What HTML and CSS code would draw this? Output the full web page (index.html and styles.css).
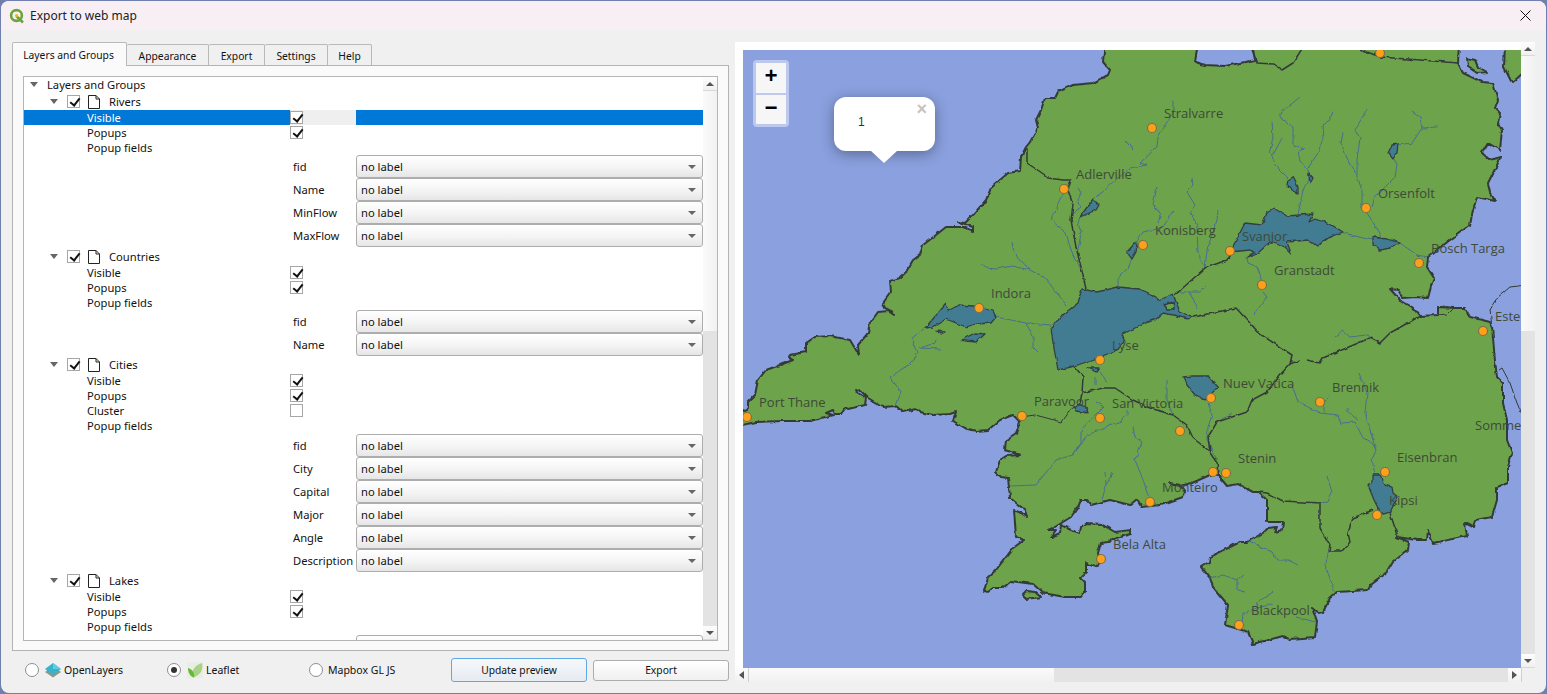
FILE: index.html
```html
<!DOCTYPE html>
<html lang="en">
<head>
<meta charset="utf-8">
<title>Export to web map</title>
<link rel="stylesheet" href="styles.css">
</head>
<body>
<div class="window">
  <header class="titlebar">
    <svg class="qgis" viewBox="0 0 16 16" width="16" height="16"><circle cx="7.500" cy="7.500" r="5.400" fill="none" stroke="#6ba53a" stroke-width="2.600"/><path d="M7.500 8.200l6.500 6.300" stroke="#6ba53a" stroke-width="2.600" fill="none"/><circle cx="7.600" cy="7.600" r="1.600" fill="#f0b429"/></svg>
    <span class="title">Export to web map</span>
    <svg class="close" viewBox="0 0 11 11" width="11" height="11"><path d="M.5.5l10 10M10.500.5l-10 10" stroke="#111" fill="none"/></svg>
  </header>
  <div class="content">
    <section class="left">
      <nav class="tabs">
        <span class="tab active">Layers and Groups</span>
        <span class="tab t-app">Appearance</span>
        <span class="tab t-exp">Export</span>
        <span class="tab t-set">Settings</span>
        <span class="tab t-help">Help</span>
      </nav>
      <div class="pane">
        <div class="treebox">
          <div class="tree">
            <div class="root"><i class="arrow"></i><span>Layers and Groups</span></div>

            <div class="layer"><i class="arrow"></i><b class="check on"></b><svg class="doc" viewBox="0 0 12 14" width="12" height="14"><path d="M.5.5h7.500l3.500 3.500v9.500h-11zM8 .5v3.500h3.500" fill="#fff" stroke="#222"/></svg><span>Rivers</span></div>
            <div class="prop selected"><span class="pname">Visible</span><span class="pval"><b class="check on"></b></span><span class="pfill"></span></div>
            <div class="prop"><span class="pname">Popups</span><span class="pval"><b class="check on"></b></span></div>
            <div class="prop"><span class="pname">Popup fields</span></div>
            <div class="field"><span class="flabel">fid</span><span class="combo">no label</span></div>
            <div class="field"><span class="flabel">Name</span><span class="combo">no label</span></div>
            <div class="field"><span class="flabel">MinFlow</span><span class="combo">no label</span></div>
            <div class="field"><span class="flabel">MaxFlow</span><span class="combo">no label</span></div>

            <div class="layer gap"><i class="arrow"></i><b class="check on"></b><svg class="doc" viewBox="0 0 12 14" width="12" height="14"><path d="M.5.5h7.500l3.500 3.500v9.500h-11zM8 .5v3.500h3.500" fill="#fff" stroke="#222"/></svg><span>Countries</span></div>
            <div class="prop"><span class="pname">Visible</span><span class="pval"><b class="check on"></b></span></div>
            <div class="prop"><span class="pname">Popups</span><span class="pval"><b class="check on"></b></span></div>
            <div class="prop"><span class="pname">Popup fields</span></div>
            <div class="field"><span class="flabel">fid</span><span class="combo">no label</span></div>
            <div class="field"><span class="flabel">Name</span><span class="combo">no label</span></div>

            <div class="layer"><i class="arrow"></i><b class="check on"></b><svg class="doc" viewBox="0 0 12 14" width="12" height="14"><path d="M.5.5h7.500l3.500 3.500v9.500h-11zM8 .5v3.500h3.500" fill="#fff" stroke="#222"/></svg><span>Cities</span></div>
            <div class="prop"><span class="pname">Visible</span><span class="pval"><b class="check on"></b></span></div>
            <div class="prop"><span class="pname">Popups</span><span class="pval"><b class="check on"></b></span></div>
            <div class="prop"><span class="pname">Cluster</span><span class="pval"><b class="check"></b></span></div>
            <div class="prop fieldhead"><span class="pname">Popup fields</span></div>
            <div class="field"><span class="flabel">fid</span><span class="combo">no label</span></div>
            <div class="field"><span class="flabel">City</span><span class="combo">no label</span></div>
            <div class="field"><span class="flabel">Capital</span><span class="combo">no label</span></div>
            <div class="field"><span class="flabel">Major</span><span class="combo">no label</span></div>
            <div class="field"><span class="flabel">Angle</span><span class="combo">no label</span></div>
            <div class="field"><span class="flabel">Description</span><span class="combo">no label</span></div>

            <div class="layer"><i class="arrow"></i><b class="check on"></b><svg class="doc" viewBox="0 0 12 14" width="12" height="14"><path d="M.5.5h7.500l3.500 3.500v9.500h-11zM8 .5v3.500h3.500" fill="#fff" stroke="#222"/></svg><span>Lakes</span></div>
            <div class="prop"><span class="pname">Visible</span><span class="pval"><b class="check on"></b></span></div>
            <div class="prop"><span class="pname">Popups</span><span class="pval"><b class="check on"></b></span></div>
            <div class="prop fieldhead"><span class="pname">Popup fields</span></div>
            <div class="field"><span class="flabel"></span><span class="combo"></span></div>
          </div>
          <div class="vscroll tree-scroll">
            <span class="sbtn"><i class="up"></i></span>
            <span class="thumb"></span>
            <span class="track"></span>
            <span class="sbtn"><i class="down"></i></span>
          </div>
        </div>
      </div>
      <footer class="bottom">
        <label class="opt"><i class="radio"></i>
          <svg class="ficon" viewBox="0 0 16 16" width="16" height="16"><path d="M8 4.500L16 10 8 15.500 0 10z" fill="#8a9a86"/><path d="M8 1L16 7 8 13 0 7z" fill="#35b3cf"/><path d="M8 1L16 7 8 7z" fill="#63cbe0"/></svg>
          <span>OpenLayers</span></label>
        <label class="opt"><i class="radio sel"></i>
          <svg class="ficon" viewBox="0 0 16 16" width="16" height="16"><rect width="16" height="16" fill="#e9ede6"/><path d="M15 1C16.500 7 14 13 6 15.500 3.500 9 8 3 15 1z" fill="#a8d285"/><path d="M1 6C1 10 3 15 7 15.500 8 11 5 7 1 6z" fill="#62bb30"/></svg>
          <span>Leaflet</span></label>
        <label class="opt"><i class="radio"></i><span class="mapbox">Mapbox GL JS</span></label>
        <button class="btn primary">Update preview</button>
        <button class="btn export">Export</button>
      </footer>
    </section>
    <section class="right">
      <div class="viewrow">
        <div class="webview">
          <div class="map">
            <svg class="mapsvg" viewBox="743 50 778 618" width="778" height="618">
              <defs>
                <filter id="rough" filterUnits="userSpaceOnUse" x="743" y="50" width="778" height="618">
                  <feTurbulence type="fractalNoise" baseFrequency="0.14" numOctaves="2" seed="4"/>
                  <feDisplacementMap in="SourceGraphic" scale="3.500" xChannelSelector="R" yChannelSelector="G"/>
                </filter>
              </defs>
              <g class="terrain">
              <polygon class="land" points="1104.700,44 1103,62 1110,70 1108,75 1093,83 1073,85 1058,92 1055,98 1045,98 1041,110 1036,120 1038,128 1030,142 1026,147 1021,157 1020,171 1008,173 991,188 986,200 973,215 965,223 958,222 973,227 973,231 963,227 946,227 936,235 923,245 920,255 913,260 906,272 900,278 890,281 891,292 883,303 885,308 893,312 894,315 888,311 878,312 870,323 868,333 858,345 859,355 850,340 830,336 815,337 806,343 806,352 790,355 789,358 793,360 780,365 766,370 758,380 755,395 748,402 748,408 738,413 738,426 756,422 783,421 810,421 825,417 833,415 826,413 833,410 835,414 841,414 845,407 848,409 865,405 866,398 855,391 860,390 868,398 883,407 896,406 903,412 916,409 920,412 933,415 950,414 956,412 953,421 965,428 976,431 988,430 1000,420 1013,415 1020,422 1016,433 1006,440 1005,450 1020,455 1006,456 1000,460 996,472 1001,477 1008,478 1010,498 1025,510 1027,517 1021,513 1014,510 1016,537 1024,540 1013,548 996,570 988,577 984,591 988,592 993,588 1003,588 1011,581 1033,584 1043,593 1065,597 1081,597 1085,592 1085,583 1080,578 1086,572 1086,563 1095,567 1100,563 1098,553 1101,543 1108,542 1116,538 1131,534 1131,530 1115,532 1101,524 1086,523 1081,527 1080,533 1071,530 1061,525 1060,533 1051,537 1056,530 1048,530 1055,527 1071,517 1078,507 1081,500 1086,500 1091,505 1110,500 1130,505 1137,499 1142,507 1160,505 1183,497 1185,492 1180,485 1170,483 1180,486 1192,483 1210,475 1218,475 1227,486 1238,484 1253,492 1258,492 1267,500 1267,522 1283,522 1282,530 1275,532 1277,527 1268,528 1263,533 1247,542 1240,542 1210,557 1209,562 1201,567 1210,578 1213,587 1228,605 1225,625 1248,632 1253,644 1283,636 1290,639 1315,637 1317,622 1312,608 1318,613 1323,612 1330,598 1337,592 1368,590 1372,583 1387,572 1393,562 1408,550 1409,542 1397,537 1417,540 1427,540 1428,530 1433,543 1467,536 1465,523 1473,527 1475,520 1492,517 1497,500 1497,487 1508,483 1508,467 1512,453 1507,440 1507,420 1503,403 1503,383 1497,377 1495,360 1492,327 1490,322 1470,317 1465,308 1455,308 1438,307 1438,315 1420,316 1412,307 1400,300 1390,289 1398,290 1403,298 1415,297 1428,298 1432,283 1434,278 1427,267 1428,257 1450,240 1470,225 1473,210 1477,197 1495,201 1490,193 1488,183 1497,165 1501,157 1490,160 1482,153 1488,143 1500,150 1502,130 1498,123 1500,113 1495,108 1498,100 1493,83 1482,82 1463,73 1458,63 1459,44 1252,44 1255,60 1225,66 1205,65 1195,62 1198,44"/>
              <polygon class="land" points="1467,58 1475,60 1478,67 1487,72 1477,73 1468,67"/>
              <polygon class="land" points="1505,44 1504,67 1512,83 1526,70 1526,44"/>
              <polygon class="land" points="1022,595 1026,591 1035,592 1041,597 1026,599"/>

              <g class="rivers">
                <polyline points="1300,97 1280,113 1280,117 1293,127 1293,145 1305,148 1298,152 1300,160 1308,170 1309,178 1303,190 1298,215"/>
                <polyline points="1333,111 1330,120 1322,125 1323,138 1318,153 1308,168"/>
                <polyline points="1272,122 1273,138 1270,150 1275,165 1288,178"/>
                <polyline points="1282,138 1273,155"/>
                <polyline points="1367,109 1355,130 1360,138 1357,160 1357,177 1362,190 1362,207"/>
                <polyline points="1343,133 1341,143 1350,165 1357,175"/>
                <polyline points="1365,210 1380,233 1380,238"/>
                <polyline points="1372,207 1375,197 1395,177 1397,163 1393,158"/>
                <polyline points="1398,145 1412,143 1422,128 1437,127"/>
                <polyline points="1422,128 1420,118 1411,111"/>
                <polyline points="1343,233 1363,238 1373,240"/>
                <polyline points="1400,243 1417,255 1427,257"/>
                <polyline points="1218,210 1217,220 1207,250 1205,268"/>
                <polyline points="1192,178 1193,185 1187,192 1195,205 1191,213 1197,227 1198,253 1205,267"/>
                <polyline points="1157,188 1153,203 1160,215 1158,223"/>
                <polyline points="1173,211 1163,227 1143,232 1133,245"/>
                <polyline points="1173,100 1173,113 1158,137 1157,147 1140,163 1147,165 1130,168 1113,182 1096,197 1093,200"/>
                <polyline points="1125,140 1133,150"/>
                <polyline points="1078,188 1081,193 1078,200 1081,207 1073,213"/>
                <polyline points="1080,217 1078,223 1081,232 1078,250"/>
                <polyline points="1064,193 1051,220 1066,233 1071,250 1080,267"/>
                <polyline points="1012,242 1014,253 1030,270 1045,278 1068,307"/>
                <polyline points="981,264 986,268 996,269 1013,266 1030,270"/>
                <polyline points="996,317 1026,323 1051,325"/>
                <polyline points="1026,323 1033,337 1033,347 1038,352"/>
                <polyline points="925,328 912,338 918,353 913,360 908,365 890,377 901,392 896,406"/>
                <polyline points="936,339 935,343 920,348 941,349"/>
                <polyline points="1096,402 1103,407 1095,415 1081,430 1081,443 1073,455 1056,460 1036,485 1010,486"/>
                <polyline points="1073,455 1088,435 1103,428 1121,422 1123,417 1128,415 1128,410"/>
                <polyline points="1105,472 1106,485 1113,473"/>
                <polyline points="1106,485 1102,500"/>
                <polyline points="1167,380 1167,400 1173,415"/>
                <polyline points="1118,287 1118,278 1128,268 1132,259"/>
                <polyline points="1247,257 1248,263 1257,267 1260,275 1262,283"/>
                <polyline points="1263,292 1267,297 1253,315"/>
                <polyline points="1177,292 1190,292 1198,310"/>
                <polyline points="1206,286 1200,292 1190,292"/>
                <polyline points="1095,377 1095,385"/>
                <polyline points="1100,372 1107,382"/>
                <polyline points="1133,427 1135,437 1142,442 1135,460 1142,477 1147,493 1158,507"/>
                <polyline points="1208,403 1212,415 1208,427 1207,440 1217,460"/>
                <polyline points="1232,413 1217,422"/>
                <polyline points="1292,385 1298,402 1320,413 1338,415 1341,423 1355,422 1363,438 1372,443 1376,450"/>
                <polyline points="1329,395 1324,403 1324,412"/>
                <polyline points="1348,408 1348,412 1358,420"/>
                <polyline points="1359,373 1367,393 1365,413 1376,450 1372,460 1375,475"/>
                <polyline points="1327,476 1332,492 1328,502 1320,503"/>
                <polyline points="1247,540 1272,552 1277,560 1288,560 1298,565"/>
                <polyline points="1329,551 1325,565 1335,592"/>
                <polyline points="1209,578 1223,575 1237,580 1243,575"/>
                <polyline points="1237,580 1237,590 1245,592"/>
                <polyline points="1273,592 1258,602 1257,608 1243,613 1242,623"/>
                <polyline points="1257,608 1273,604"/>
                <polyline points="1297,617 1315,622"/>
                <polyline points="1335,337 1343,331 1350,337 1367,335 1380,343"/>
              </g>

              <g class="borders">
                <polyline points="1027,148 1027,163 1045,175 1048,178 1063,180 1071,180 1068,190 1073,205 1071,220 1076,247 1081,267 1086,289"/>
                <polyline points="1075,367 1083,377 1082,393 1080,403"/>
                <polyline class="thin" points="1080,403 1068,412 1061,422 1043,417 1035,415 1021,417"/>
                <polyline points="1082,393 1103,388 1115,388 1133,400 1150,408 1173,415 1187,425 1193,438 1208,450 1217,463 1218,475"/>
                <polyline points="1193,317 1236,308 1260,334 1292,355 1290,364 1280,375 1267,392 1252,400 1247,412 1217,422 1208,437 1210,452"/>
                <polyline points="1290,364 1300,360"/>
                <polyline points="1307,360 1320,363 1323,358 1370,338 1380,343 1390,333 1420,316"/>
                <polyline points="1320,503 1320,528 1330,545 1329,551 1342,551 1350,542 1348,533 1353,518 1373,510"/>
                <polyline points="1258,492 1267,493 1283,501 1320,503"/>
                <polyline points="1390,513 1398,537"/>
                <polyline points="1250,44 1257,63 1273,64 1282,70 1293,63 1305,44"/>
                <polyline points="1357,48 1380,57 1420,60 1458,63"/>
                <polyline points="1233,252 1227,260 1205,268 1175,295"/>
                <polyline class="thin" points="1526,285 1510,287 1497,298 1490,310 1492,327"/>
                <polyline class="thin" points="1499,370 1502,368 1510,383 1517,403 1526,424"/>
                <polyline class="thin" points="1438,307 1445,306 1453,308 1447,314 1438,315"/>
              </g>

              <g class="lakes">
                <polygon points="1082,289 1097,292 1117,287 1140,289 1157,297 1158,300 1173,294 1180,312 1193,317 1188,319 1173,315 1163,313 1155,320 1147,322 1127,332 1122,335 1125,342 1117,350 1100,357 1075,366 1058,370 1053,343 1051,327 1065,313 1078,303"/>
                <polygon class="isle" points="1164,305 1173,302 1174,309 1168,309"/>
                <polygon points="1230,252 1245,223 1262,225 1267,213 1275,209 1287,216 1313,214 1309,222 1315,219 1330,224 1343,232 1330,237 1317,246 1308,240 1287,242 1291,253 1285,247 1270,242 1258,253 1248,257 1255,252 1250,250"/>
                <polygon points="1373,237 1387,239 1400,243 1390,248 1380,250 1373,245"/>
                <polygon points="1288,180 1293,177 1298,187 1298,193 1292,190 1287,185"/>
                <polygon points="1309,173 1313,178 1310,184"/>
                <polygon points="1388,153 1392,145 1398,144 1397,153 1393,159"/>
                <polygon points="1127,252 1135,243 1137,245 1136,252 1132,259"/>
                <polygon points="1080,217 1093,199 1099,205 1096,210"/>
                <polygon points="925,328 946,304 948,310 960,305 973,306 983,308 993,311 996,317 991,323 976,324 966,327 956,323 946,319 933,327"/>
                <polygon points="936,331 945,332 941,334"/>
                <polygon points="961,340 975,333 985,334 976,342 966,341"/>
                <polygon points="1184,377 1193,376 1208,376 1218,387 1205,400 1195,395 1187,385"/>
                <polygon points="1373,475 1380,475 1385,485 1392,487 1393,493 1398,497 1390,512 1383,514 1378,508 1374,500 1368,485 1373,482"/>
                <polygon points="1073,408 1080,404 1086,407 1088,413 1076,411"/>
                <polygon points="1088,368 1100,368 1097,372"/>
              </g>
              </g>

              <g class="cities">
                <circle cx="1380" cy="53" r="4.500"/><circle cx="1152" cy="128" r="4.500"/><circle cx="1064" cy="189" r="4.500"/>
                <circle cx="1143" cy="245" r="4.500"/><circle cx="1230" cy="251" r="4.500"/><circle cx="1262" cy="285" r="4.500"/>
                <circle cx="1366" cy="208" r="4.500"/><circle cx="1419" cy="263" r="4.500"/><circle cx="1483" cy="331" r="4.500"/>
                <circle cx="979" cy="308" r="4.500"/><circle cx="1100" cy="360" r="4.500"/><circle cx="1022" cy="416" r="4.500"/>
                <circle cx="1100" cy="418" r="4.500"/><circle cx="1180" cy="431" r="4.500"/><circle cx="1211" cy="398" r="4.500"/>
                <circle cx="1320" cy="402" r="4.500"/><circle cx="1226" cy="473" r="4.500"/><circle cx="1213" cy="472" r="4.500"/>
                <circle cx="1150" cy="502" r="4.500"/><circle cx="1385" cy="472" r="4.500"/><circle cx="1377" cy="515" r="4.500"/>
                <circle cx="1101" cy="559" r="4.500"/><circle cx="1239" cy="625" r="4.500"/><circle cx="747" cy="417" r="4.500"/>
              </g>

              <g class="labels">
                <text x="1164" y="118">Stralvarre</text><text x="1076" y="179">Adlerville</text><text x="1155" y="235">Konisberg</text>
                <text x="1242" y="241">Svanjor</text><text x="1274" y="275">Granstadt</text><text x="1378" y="198">Orsenfolt</text>
                <text x="1431" y="253">Bosch Targa</text><text x="1495" y="321">Este</text><text x="991" y="298">Indora</text>
                <text x="1112" y="350">Lyse</text><text x="1034" y="406">Paravoor</text><text x="1112" y="408">San Victoria</text>
                <text x="1223" y="388">Nuev Vatica</text><text x="1332" y="392">Brennik</text><text x="1238" y="463">Stenin</text>
                <text x="1162" y="492">Monteiro</text><text x="1397" y="462">Eisenbran</text><text x="1389" y="505">Kipsi</text>
                <text x="1113" y="549">Bela Alta</text><text x="1251" y="615">Blackpool</text><text x="759" y="407">Port Thane</text>
                <text x="1475" y="430">Somme</text>
              </g>
            </svg>
            <div class="zoomctl"><span class="zbtn zplus">+</span><span class="zbtn">&#8722;</span></div>
            <div class="popup"><span class="popclose">&#215;</span><span class="poptext">1</span></div>
          </div>
        </div>
        <div class="vscroll web-scroll">
          <span class="sbtn"><i class="up"></i></span>
          <span class="thumb"></span>
          <span class="track"></span>
          <span class="sbtn"><i class="down"></i></span>
        </div>
      </div>
      <div class="hscroll">
        <span class="hbtn"><i class="lefta"></i></span>
        <span class="hthumb"></span>
        <span class="htrack"></span>
        <span class="hbtn"><i class="righta"></i></span>
        <span class="corner"></span>
      </div>
    </section>
  </div>
</div>
</body>
</html>
```

FILE: styles.css
```css
* { box-sizing: border-box; }
html, body { margin: 0; height: 100%; }
body {
  background: #6f7fae;
  padding: 1px;
  font-family: "Noto Sans", "Open Sans", sans-serif;
  font-size: 11.2px;
  color: #111;
  overflow: hidden;
}
.window {
  width: 1545px;
  height: 692px;
  background: #f0f0f0;
  border-radius: 8px;
  overflow: hidden;
  display: flex;
  flex-direction: column;
}
.titlebar {
  height: 29px;
  flex: none;
  background: #f8eff5;
  display: flex;
  align-items: center;
  padding: 0 15px 0 8px;
}
.qgis { flex: none; margin-right: 5px; }
.title { font-size: 12px; flex: 1; color: #222; }
.content { flex: 1; display: flex; gap: 6px; padding-left: 11px; }

/* left column */
.left { width: 717px; padding-top: 12px; display: flex; flex-direction: column; }
.tabs { display: flex; height: 23px; align-items: flex-end; position: relative; z-index: 1; font-size: 10.3px; }
.tab {
  height: 21px;
  border: 1px solid #b9b9b9;
  border-bottom: 0;
  border-left: 0;
  border-radius: 2px 2px 0 0;
  background: #f0f0f0;
  display: flex;
  align-items: center;
  justify-content: center;
  padding-top: 1px;
}
.tab.active {
  width: 115px;
  height: 24px;
  margin-bottom: -1px;
  background: #fafafa;
  border-left: 1px solid #b9b9b9;
  padding-top: 0;
  padding-left: 0;
  padding-right: 2px;
}
.t-app { width: 82px; }
.t-exp { width: 56px; }
.t-set { width: 63px; }
.t-help { width: 44px; }
.pane {
  height: 586px;
  border: 1px solid #b3b3b3;
  background: #fafafa;
  padding: 10px 10px 9px;
}
.treebox {
  height: 100%;
  border: 1px solid #b5b5b5;
  background: #fff;
  display: flex;
}
.tree { flex: 1; overflow: hidden; min-width: 0; }
.root { height: 16px; display: flex; align-items: center; padding-left: 6px; padding-bottom: 1px; }
.root span { margin-left: 9px; }
.layer { height: 17px; display: flex; align-items: center; padding-left: 26px; }
.layer.gap { margin-top: 1px; }
.arrow {
  width: 0; height: 0; flex: none;
  border-left: 4px solid transparent;
  border-right: 4px solid transparent;
  border-top: 5px solid #666;
}
.layer .check { margin-left: 9px; }
.doc { margin-left: 8px; flex: none; }
.layer span { margin-left: 9px; }
.prop {
  height: 15px;
  display: grid;
  grid-template-columns: 266px 66px 1fr;
  align-items: center;
}
.prop.fieldhead { margin-bottom: 1px; }
.pname { padding-left: 63px; }
.pval { height: 100%; display: flex; align-items: center; }
.selected { color: #fff; background: #0078d7; }
.selected .pval { background: #efefef; }
.check {
  display: block;
  width: 13px; height: 13px;
  flex: none;
  border: 1px solid #a6a6a6;
  background: #fff;
  position: relative;
}
.check.on::after {
  content: "";
  position: absolute;
  left: 3.500px; top: 0;
  width: 4px; height: 8px;
  border: solid #111;
  border-width: 0 2px 2px 0;
  transform: rotate(38deg);
}
.field {
  height: 23px;
  display: grid;
  grid-template-columns: 269px 63px 1fr;
  align-items: center;
}
.flabel { grid-column: 2; white-space: nowrap; }
.combo {
  height: 23px;
  border: 1px solid #adadad;
  border-radius: 3px;
  background: linear-gradient(#fff, #f4f4f4 55%, #e6e6e6);
  padding-left: 4px;
  display: flex;
  align-items: center;
  position: relative;
}
.combo::after {
  content: "";
  position: absolute;
  right: 6px; top: 9px;
  border-left: 4px solid transparent;
  border-right: 4px solid transparent;
  border-top: 4px solid #666;
}

/* scrollbars */
.vscroll { width: 14px; flex: none; display: flex; flex-direction: column; }
.sbtn {
  height: 14px; flex: none;
  background: linear-gradient(#fdfdfd, #f0f0f0);
  display: flex; align-items: center; justify-content: center;
  border-bottom: 1px solid #d8d8d8;
}
.thumb { height: 240px; flex: none; background: linear-gradient(90deg, #fafafa, #f1f1f1); }
.track { flex: 1; background: #e3e3e3; }
.web-scroll { background: #f0f0f0; }
.web-scroll .thumb { height: 275px; }
.up, .down, .lefta, .righta { width: 0; height: 0; display: block; }
.up { border: 4px solid transparent; border-top: 0; border-bottom: 4px solid #555; }
.down { border: 4px solid transparent; border-bottom: 0; border-top: 4px solid #555; }
.lefta { border: 4px solid transparent; border-left: 0; border-right: 5px solid #555; }
.righta { border: 4px solid transparent; border-right: 0; border-left: 5px solid #555; }

/* footer */
.bottom { display: flex; align-items: center; height: 24px; margin-top: 7px; padding-left: 13px; font-size: 10.5px; }
.opt { width: 142px; flex: none; display: flex; align-items: center; }
.radio {
  width: 14px; height: 14px; flex: none;
  border: 1px solid #8f8f8f;
  border-radius: 50%;
  background: #fff;
  position: relative;
}
.radio.sel::after {
  content: "";
  position: absolute;
  left: 3px; top: 3px;
  width: 6px; height: 6px;
  border-radius: 50%;
  background: #333;
}
.ficon { margin: 0 3px 0 6px; flex: none; }
.mapbox { margin-left: 5px; }
.btn {
  width: 136px; height: 21px;
  border: 1px solid #adadad;
  border-radius: 3px;
  background: linear-gradient(#fff, #f0f0f0);
  font: inherit;
  font-size: 10.300px;
  color: #111;
  padding: 0;
}
.btn.primary { height: 24px; border-color: #5fa8e6; background: linear-gradient(#f6f8fb, #e6ebf1); }
.btn.export { margin-left: 6px; }

/* right column */
.right { width: 800px; padding-top: 12px; display: flex; flex-direction: column; }
.viewrow { display: flex; height: 626px; flex: none; }
.webview { flex: 1; background: #fff; padding: 8px 0 0 8px; overflow: hidden; }
.map { width: 778px; height: 618px; position: relative; background: #8aa0df; overflow: hidden; }
.mapsvg { display: block; }
.terrain { filter: url(#rough); }
.land { fill: #6da34b; stroke: #333a36; stroke-width: 2; stroke-linejoin: round; }
.rivers polyline { fill: none; stroke: #46708f; stroke-width: 1; stroke-linejoin: round; }
.borders polyline { fill: none; stroke: #333a38; stroke-width: 1.500; stroke-linejoin: round; }
.borders .thin { stroke-width: 1; }
.lakes polygon { fill: #437b92; stroke: #333f44; stroke-width: 1.300; stroke-linejoin: round; }
.lakes .isle { fill: #6da34b; stroke-width: 1.500; }
.cities circle { fill: #ff9f1a; stroke: #7d7048; stroke-width: 1.200; }
.labels text { font-family: "Open Sans", sans-serif; font-size: 13px; fill: #3e4a38; }
.zoomctl {
  position: absolute;
  left: 10px; top: 10px;
  width: 36px; height: 67px;
  border: 3px solid #bcc8ee;
  border-radius: 4px;
  background: #bcc8ee;
  display: flex; flex-direction: column; gap: 1px;
}
.zbtn {
  flex: 1;
  background: #f6f6f6;
  display: flex; align-items: center; justify-content: center;
  font: bold 22px "Liberation Mono", monospace;
  color: #000;
}
.zplus { border-bottom: 1px solid #ccc; }
.popup {
  position: absolute;
  left: 91px; top: 47px;
  width: 101px; height: 54px;
  background: #fff;
  border-radius: 12px;
  box-shadow: 0 3px 14px rgba(0,0,0,.35);
  font-family: "Liberation Sans", sans-serif;
  font-size: 12px;
  color: #333;
}
.popup::after {
  content: "";
  position: absolute;
  left: 37px; top: 54px;
  border-left: 13px solid transparent;
  border-right: 13px solid transparent;
  border-top: 12px solid #fff;
}
.poptext { position: absolute; left: 24px; top: 18px; }
.popclose { position: absolute; right: 8px; top: 2px; font: bold 18px "Liberation Sans", sans-serif; color: #c3c3c3; }
.hscroll { display: flex; height: 14px; flex: none; }
.hbtn {
  width: 14px; flex: none;
  background: linear-gradient(#fdfdfd, #f0f0f0);
  display: flex; align-items: center; justify-content: center;
  border-right: 1px solid #d0d0d0;
}
.hthumb { width: 305px; flex: none; background: linear-gradient(#fafafa, #f1f1f1); }
.htrack { flex: 1; background: #e3e3e3; }
.corner { width: 13px; flex: none; background: #f0f0f0; }
```
